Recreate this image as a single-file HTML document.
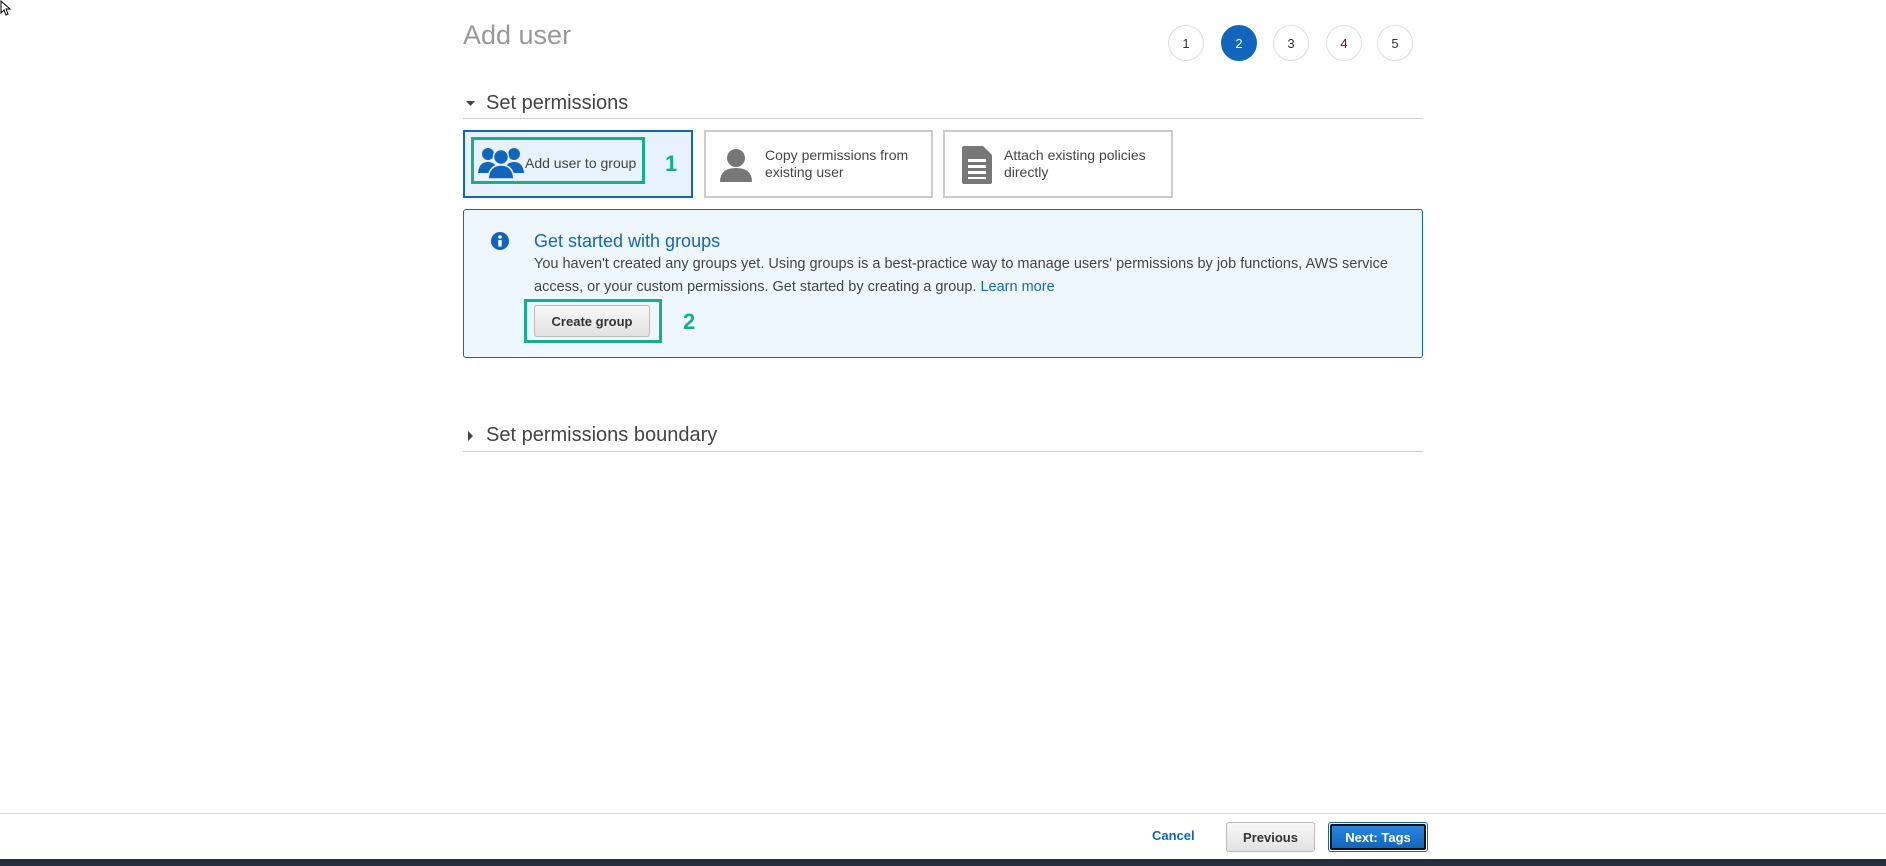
<!DOCTYPE html>
<html><head><meta charset="utf-8"><style>
*{box-sizing:border-box;margin:0;padding:0}
body{width:1886px;height:866px;background:#fff;font-family:"Liberation Sans",Arial,sans-serif;position:relative;overflow:hidden;color:#444}
.a{position:absolute}
.title{left:463px;top:20px;font-size:27px;color:#999}
.step{width:36px;height:36px;border-radius:50%;border:1px solid #ddd;background:#fff;font-size:13px;color:#333;display:flex;align-items:center;justify-content:center;top:25px}
.step.on{background:#1166bb;border-color:#1166bb;color:#fff}
.sec{left:463px;font-size:20px;color:#444}
.hr{left:463px;width:960px;height:1px;background:#ccc}
.card{top:130px;height:68px;border:2px solid #ccc;background:#fff;font-size:14px;color:#444;display:flex;align-items:center}
.info{left:463px;top:209px;width:960px;height:149px;border:1px solid #1166bb;border-radius:3px;background:#eff7fe}
.btn{border:1px solid #bbb;border-radius:3px;background:linear-gradient(#f8f8f8,#e2e2e2);font-size:13px;font-weight:bold;color:#333;display:flex;align-items:center;justify-content:center}
.green{border:3px solid #14b08c}
.num{font-size:22px;font-weight:bold;color:#14b08c}
</style></head><body>
<svg class="a" style="left:0;top:0" width="12" height="16"><path d="M1 1 L1 13 L4 10 L6 15 L8 14 L6 9 L10 9 Z" fill="#fff" stroke="#000" stroke-width="1"/></svg>
<div class="a title">Add user</div>
<div class="a step" style="left:1168px">1</div>
<div class="a step on" style="left:1221px">2</div>
<div class="a step" style="left:1273px">3</div>
<div class="a step" style="left:1326px;color:#900">4</div>
<div class="a step" style="left:1377px">5</div>

<svg class="a" style="left:466px;top:100px" width="10" height="8"><path d="M0 1 L9 1 L4.5 6 Z" fill="#444"/></svg>
<div class="a sec" style="left:486px;top:92px">Set permissions</div>
<div class="a hr" style="top:118px"></div>

<div class="a card" style="left:463px;width:230px;border-color:#1166bb;background:#e8f2fd"></div>
<div class="a green" style="left:471px;top:137px;width:174px;height:47px"></div>
<svg class="a" style="left:478px;top:145px" width="46" height="34" viewBox="0 0 46 34">
<g fill="#1166bb"><circle cx="10" cy="9" r="6"/><circle cx="36" cy="9" r="6"/><path d="M0 28 Q1 17 10 17 Q19 17 20 28 Z"/><path d="M26 28 Q27 17 36 17 Q45 17 46 28 Z"/>
<circle cx="23" cy="12" r="7.5" stroke="#e8f2fd" stroke-width="1.5"/><path d="M10 34 Q11 20 23 20 Q35 20 36 34 Z" stroke="#e8f2fd" stroke-width="1.5"/></g></svg>
<div class="a" style="left:525px;top:155px;font-size:14px;color:#444">Add user to group</div>
<div class="a num" style="left:665px;top:151px">1</div>

<div class="a card" style="left:704px;width:229px"></div>
<svg class="a" style="left:720px;top:148px" width="32" height="34" viewBox="0 0 32 34"><g fill="#777"><circle cx="16" cy="10" r="9"/><path d="M0 34 Q0 20 16 20 Q32 20 32 34 Z"/></g></svg>
<div class="a" style="left:765px;top:147px;font-size:14px;line-height:17px;color:#444">Copy permissions from<br>existing user</div>

<div class="a card" style="left:943px;width:230px"></div>
<svg class="a" style="left:962px;top:146px" width="30" height="38" viewBox="0 0 30 38"><path d="M0 2 Q0 0 2 0 L21 0 L30 9 L30 36 Q30 38 28 38 L2 38 Q0 38 0 36 Z" fill="#777"/><g fill="#fff"><rect x="6" y="13" width="18" height="3"/><rect x="6" y="19" width="18" height="3"/><rect x="6" y="25" width="18" height="3"/><rect x="6" y="31" width="18" height="2"/></g></svg>
<div class="a" style="left:1004px;top:147px;font-size:14px;line-height:17px;color:#444">Attach existing policies<br>directly</div>

<div class="a info"></div>
<svg class="a" style="left:491px;top:232px" width="18" height="18"><circle cx="9" cy="9" r="9" fill="#1166bb"/><circle cx="9" cy="5" r="1.8" fill="#fff"/><rect x="7.3" y="8" width="3.4" height="6.5" fill="#fff"/></svg>
<div class="a" style="left:534px;top:231px;font-size:18px;color:#1166bb">Get started with groups</div>
<div class="a" style="left:534px;top:253px;font-size:14.5px;line-height:23px;color:#444;width:900px;white-space:nowrap">You haven't created any groups yet. Using groups is a best-practice way to manage users' permissions by job functions, AWS service<br>access, or your custom permissions. Get started by creating a group. <span style="color:#1166bb">Learn more</span></div>
<div class="a green" style="left:524px;top:299px;width:138px;height:44px"></div>
<div class="a btn" style="left:534px;top:305px;width:116px;height:32px">Create group</div>
<div class="a num" style="left:683px;top:309px">2</div>

<svg class="a" style="left:467px;top:431px" width="8" height="10"><path d="M1 0 L6 5 L1 10 Z" fill="#444"/></svg>
<div class="a sec" style="left:486px;top:424px">Set permissions boundary</div>
<div class="a hr" style="top:451px"></div>

<div class="a" style="left:0;top:813px;width:1886px;height:1px;background:#ddd"></div>
<div class="a" style="left:1152px;top:828px;font-size:13px;font-weight:bold;color:#1166bb">Cancel</div>
<div class="a btn" style="left:1226px;top:822px;width:89px;height:30px">Previous</div>
<div class="a" style="left:1328px;top:822px;width:100px;height:30px;border:1px solid #1166bb;border-radius:3px;padding:1px;background:#fff"><div style="width:100%;height:100%;border:2px solid #111;border-radius:2px;background:linear-gradient(#2b86e0,#1166bb);color:#fff;font-size:13px;font-weight:bold;display:flex;align-items:center;justify-content:center">Next: Tags</div></div>
<div class="a" style="left:0;top:859px;width:1886px;height:7px;background:#232f3e"></div>
</body></html>
